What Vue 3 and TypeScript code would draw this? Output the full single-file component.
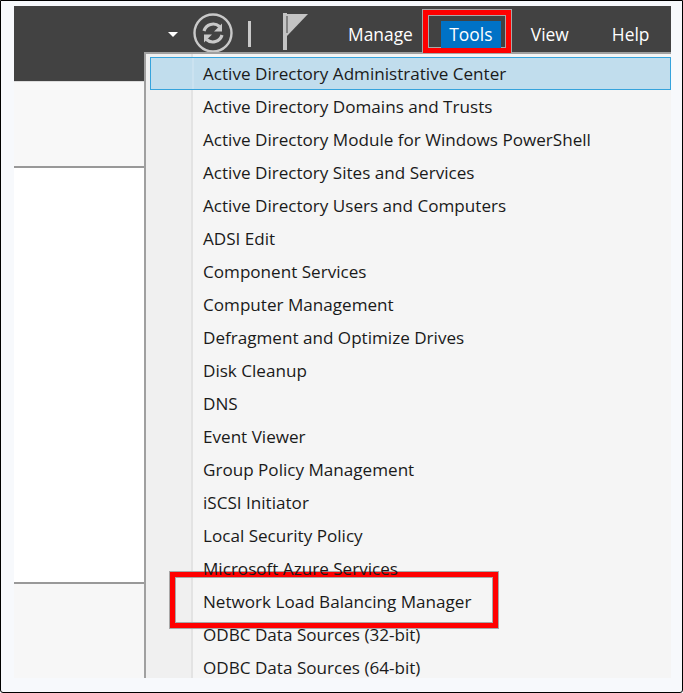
<script setup lang="ts">
const tools: string[] = [
  'Active Directory Administrative Center',
  'Active Directory Domains and Trusts',
  'Active Directory Module for Windows PowerShell',
  'Active Directory Sites and Services',
  'Active Directory Users and Computers',
  'ADSI Edit',
  'Component Services',
  'Computer Management',
  'Defragment and Optimize Drives',
  'Disk Cleanup',
  'DNS',
  'Event Viewer',
  'Group Policy Management',
  'iSCSI Initiator',
  'Local Security Policy',
  'Microsoft Azure Services',
  'Network Load Balancing Manager',
  'ODBC Data Sources (32-bit)',
  'ODBC Data Sources (64-bit)',
]
</script>

<template>
  <div class="frame">
    <div class="window">
      <header class="topbar">
        <svg class="caret" width="10" height="5" viewBox="0 0 10 5"><path d="M0 0h10L5 5z" fill="#fff" /></svg>
        <svg class="refresh" width="40" height="40" viewBox="0 0 40 40">
          <circle cx="20" cy="20" r="18.500" fill="none" stroke="#c9c9c9" stroke-width="2.4" />
          <path d="M11 18a9.500 9.500 0 0 1 15.500-4.500" fill="none" stroke="#c9c9c9" stroke-width="3.2" />
          <path d="M29 10.500v8h-8z" fill="#c9c9c9" />
          <path d="M29 22a9.500 9.500 0 0 1-15.500 4.500" fill="none" stroke="#c9c9c9" stroke-width="3.2" />
          <path d="M11 29.500v-8h8z" fill="#c9c9c9" />
        </svg>
        <span class="divider"></span>
        <svg class="flag" width="26" height="38" viewBox="0 0 26 38">
          <path d="M0 0h4v37H0z" fill="#c4c4c4" />
          <path d="M4 1h21L4 23z" fill="#c4c4c4" />
          <path d="M4 3v17" stroke="#424242" stroke-width="1" />
        </svg>
        <nav class="nav">
          <span class="nav-item manage">Manage</span>
          <span class="nav-item tools">
            <span class="callout tools-callout"></span>
            <span class="tools-label">Tools</span>
          </span>
          <span class="nav-item view">View</span>
          <span class="nav-item help">Help</span>
        </nav>
      </header>

      <section class="pane-top"></section>
      <section class="pane-middle"></section>
      <section class="pane-bottom"></section>

      <ul class="menu">
        <li
          v-for="(tool, i) in tools"
          :key="tool"
          :class="['menu-item', { 'menu-item--active': i === 0 }]"
        >
          <span v-if="tool.startsWith('Network')" class="callout row-callout"></span>
          <span class="menu-label">{{ tool }}</span>
        </li>
      </ul>
    </div>
  </div>
</template>

<style>
html,
body {
  margin: 0;
  background: #f7f9fc;
}
</style>

<style scoped>
.frame {
  box-sizing: border-box;
  width: 683px;
  height: 693px;
  padding: 5px 11px 14px 13px;
  border: 1px solid #000;
  border-radius: 0 0 3px 3px;
  background: #f7f9fc;
  font-family: "Open Sans", "Noto Sans", sans-serif;
}

.window {
  position: relative;
  display: flex;
  flex-direction: column;
  height: 100%;
  overflow: hidden;
}

.topbar {
  display: flex;
  flex: none;
  height: 76px;
  box-sizing: border-box;
  padding: 7px 0 0 154px;
  background: #424242;
  border-bottom: 1px solid #dcdcdc;
  color: #fff;
}

.caret {
  margin-top: 19px;
}

.refresh {
  margin: 0 0 0 15px;
}

.divider {
  width: 3px;
  height: 26px;
  margin: 8px 0 0 15px;
  background: #c9c9c9;
}

.flag {
  margin: 0 0 0 32px;
}

.nav {
  display: flex;
  align-items: flex-start;
  margin-left: 39px;
  font-size: 17.4px;
  line-height: 27px;
}

.nav-item {
  position: relative;
  margin-top: 8px;
}

.tools {
  z-index: 3;
  margin-left: 28px;
  width: 60px;
  text-align: center;
}

.tools-label {
  position: relative;
  display: block;
  background: #0072c6;
}

.view {
  margin-left: 30px;
}

.help {
  margin-left: 43px;
}

.pane-top {
  flex: none;
  height: 84px;
  background: #f8f8f8;
  border-bottom: 2px solid #999;
}

.pane-middle {
  flex: none;
  height: 414px;
  background: #fff;
  border-bottom: 2px solid #999;
}

.pane-bottom {
  flex: 1;
  background: #f7f7f7;
}

.menu {
  position: absolute;
  top: 46px;
  left: 130px;
  right: 0;
  bottom: 0;
  box-sizing: border-box;
  margin: 0;
  padding: 3px 0 0 4px;
  overflow: hidden;
  list-style: none;
  border-top: 2px solid #a0a0a0;
  border-left: 2px solid #a0a0a0;
  background: linear-gradient(to right, #f0f0f0 45px, #e3e3e3 45px, #e3e3e3 47px, #f5f5f5 47px);
  color: #1a1a1a;
  font-size: 17.1px;
}

.menu-item {
  position: relative;
  height: 33px;
  padding-left: 53px;
  line-height: 33px;
  white-space: nowrap;
}

.menu-item--active {
  box-sizing: border-box;
  border: 1px solid #36a3dc;
  padding-left: 52px;
  line-height: 31px;
  background: linear-gradient(to right, #c1dded 41px, #cbe2f0 41px, #cbe2f0 43px, #c1dded 43px);
}

.menu-label {
  position: relative;
  z-index: 2;
}

.callout {
  box-sizing: border-box;
  position: absolute;
  border: 5px solid #f00;
  outline: 1px solid #a8a8a8;
  box-shadow: inset 0 0 0 1px #a8a8a8;
}

.tools-callout {
  top: -11px;
  left: -18px;
  width: 88px;
  height: 43px;
}

.row-callout {
  z-index: 1;
  top: -13px;
  left: 20px;
  width: 328px;
  height: 56px;
  background: linear-gradient(to right, #f0f0f0 16px, #e3e3e3 16px, #e3e3e3 18px, #f5f5f5 18px);
}
</style>
